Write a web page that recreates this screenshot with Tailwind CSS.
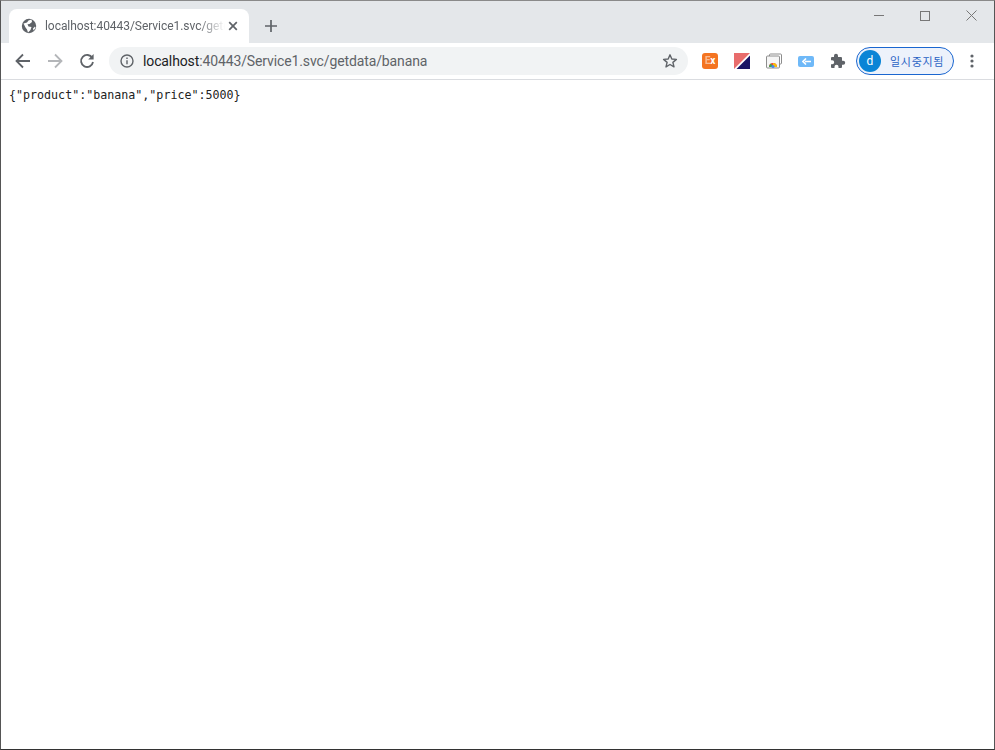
<!DOCTYPE html>
<html lang="ko">
<head>
  <meta charset="UTF-8">
  <title>localhost:40443/Service1.svc/getdata/banana</title>
  <script src="https://cdn.jsdelivr.net/npm/@tailwindcss/browser@4"></script>
</head>
<body class="bg-white">
  <div class="w-[995px] h-[750px] flex flex-col overflow-hidden border border-[#555] border-b-[#333] border-t-[#8a8a8a] font-['Roboto','Liberation_Sans',sans-serif]">

    <!-- Tab strip -->
    <div class="h-[42px] shrink-0 bg-[#e4e7ea] flex items-end pl-2 relative">
      <div class="relative w-[240px] h-[34px] bg-white rounded-t-lg flex items-center pl-[12px] pr-[11px]">
        <svg class="w-4 h-4 shrink-0 mr-[8px]" viewBox="0 0 16 16"><circle cx="8" cy="8" r="7.2" fill="#5f6368"/><path d="M2.5 5.5 6 4.5 7.5 2.5 10.500 1.500 11 4 8.500 6 6.500 6.200 7.500 8.500 10.500 9 9.500 12 7 14.500 6 11.500 4.500 9.500z" fill="#fff"/><path d="M12 10.500 14 8.500 14.500 10 12.500 12.500z" fill="#fff"/></svg>
        <div class="w-[180px] whitespace-nowrap overflow-hidden text-[12px] tracking-[-0.05px] text-[#5f6368] [mask-image:linear-gradient(to_right,black_85%,transparent)]">localhost:40443/Service1.svc/getdata/banana</div>
        <svg class="w-[10px] h-[10px] ml-auto shrink-0" viewBox="0 0 10 10"><path d="M1.200 1.200 8.800 8.800M8.800 1.200 1.200 8.800" stroke="#5f6368" stroke-width="1.700" fill="none"/></svg>
      </div>
      <svg class="w-3 h-3 ml-[16px] mb-[11px]" viewBox="0 0 12 12"><path d="M6 0v12M0 6h12" stroke="#5f6368" stroke-width="1.700" fill="none"/></svg>
      <!-- Window controls -->
      <div class="absolute right-0 top-0 flex items-center gap-[36px] pr-[17px] pt-[9px]">
        <div class="w-[10px] h-[10px] flex items-center"><div class="w-[10px] h-px bg-[#777]"></div></div>
        <div class="w-[10px] h-[10px] border border-[#777]"></div>
        <svg class="w-[11px] h-[11px]" viewBox="0 0 11 11"><path d="M.5.5l10 10M10.500.5l-10 10" stroke="#777" fill="none"/></svg>
      </div>
    </div>

    <!-- Toolbar -->
    <div class="h-[37px] shrink-0 bg-white border-b border-[#dadce0] flex items-center relative">
      <svg class="w-4 h-4 ml-[14px] shrink-0" viewBox="0 0 16 16"><path d="M15 8H2M8 1.500 1.500 8 8 14.500" stroke="#5f6368" stroke-width="1.800" fill="none"/></svg>
      <svg class="w-4 h-4 ml-[16px] shrink-0" viewBox="0 0 16 16"><path d="M1 8h13M8 1.500 14.500 8 8 14.500" stroke="#b4b6b9" stroke-width="1.800" fill="none"/></svg>
      <svg class="w-4 h-4 ml-[16px] shrink-0" viewBox="0 0 16 16"><path d="M13.300 5A6 6 0 1 0 14 9" stroke="#5f6368" stroke-width="1.800" fill="none"/><path d="M14.600 1v5.400H9.200z" fill="#5f6368"/></svg>
      <!-- Address bar -->
      <div class="ml-[14px] w-[579px] h-[28px] shrink-0 rounded-full bg-[#f1f3f4] flex items-center pl-[11px] pr-[10px]">
        <svg class="w-[14px] h-[14px] shrink-0" viewBox="0 0 14 14"><circle cx="7" cy="7" r="6" stroke="#5f6368" stroke-width="1.400" fill="none"/><path d="M7 6.200v4M7 3.600v1.500" stroke="#5f6368" stroke-width="1.400"/></svg>
        <div class="ml-[9px] text-[14px] tracking-[-0.12px] whitespace-nowrap text-[#5f6368]"><span class="text-[#202124]">localhost</span>:40443/Service1.svc/getdata/banana</div>
        <svg class="w-4 h-4 ml-auto shrink-0" viewBox="0 0 16 16"><path d="M8 1.800 9.800 6l4.600.4-3.500 3 1.100 4.500L8 11.500l-4 2.400 1.100-4.500-3.500-3L6.200 6z" stroke="#5f6368" stroke-width="1.400" fill="none" stroke-linejoin="round"/></svg>
      </div>
      <!-- Extensions -->
      <div class="ml-[14px] w-4 h-4 shrink-0 rounded-[3px] bg-[#f47421] flex items-center justify-center text-white text-[10px] font-bold leading-none"><span class="opacity-50">E</span>x</div>
      <svg class="w-4 h-4 ml-[16px] shrink-0" viewBox="0 0 16 16"><path d="M0 0h16L0 16z" fill="#e86c6c"/><path d="M16 2.500V16H2.500z" fill="#1a1464"/></svg>
      <svg class="w-4 h-4 ml-[16px] shrink-0" viewBox="0 0 16 16"><rect x="3.500" y="1" width="12" height="10" rx="1" fill="#fff" stroke="#8d8d8d"/><rect x=".5" y="3" width="13" height="12" rx="1" fill="#f6f6f6" stroke="#8d8d8d"/><path d="M3 14a4 4 0 0 1 8 0z" fill="#ea4335"/><path d="M7 14V10a4 4 0 0 1 4 4z" fill="#fbbc05"/><path d="M3 14a4 4 0 0 1 2-3.400L7 14z" fill="#34a853"/><circle cx="7" cy="13.500" r="1.500" fill="#4285f4"/></svg>
      <div class="ml-[16px] w-4 h-[11px] shrink-0 rounded-[2px] bg-[#6fb9f8] flex items-center justify-center">
        <svg class="w-[9px] h-[7px]" viewBox="0 0 9 7"><path d="M9 3.500H3M4 .5 1 3.500 4 6.500" stroke="#fff" stroke-width="1.600" fill="none"/></svg>
      </div>
      <svg class="w-4 h-4 ml-[16px] shrink-0" viewBox="0 0 16 16"><path d="M6 .8a2 2 0 0 1 2 2V4h3a1 1 0 0 1 1 1v2.700h1.200a2 2 0 0 1 0 4H12V14a1 1 0 0 1-1 1H8.500v-1.200a2 2 0 0 0-4 0V15H2a1 1 0 0 1-1-1v-2.800h1.200a2 2 0 0 0 0-4H1V5a1 1 0 0 1 1-1h2V2.800a2 2 0 0 1 2-2z" fill="#5f6368"/></svg>
      <!-- Profile chip -->
      <div class="ml-[10px] w-[98px] h-[28px] shrink-0 rounded-full border border-[#1a66d0] bg-[#edf2fb] flex items-center pl-[2px]">
        <div class="w-[22px] h-[22px] rounded-full bg-[#0a84d6] text-white text-[12px] flex items-center justify-center">d</div>
        <div class="ml-[9px] text-[11px] tracking-[0.7px] text-[#2a62c4] whitespace-nowrap font-['Noto_Sans_CJK_KR',sans-serif]">일시중지됨</div>
      </div>
      <svg class="w-1 h-[14px] ml-[16px] shrink-0" viewBox="0 0 4 14"><circle cx="2" cy="2" r="1.600" fill="#5f6368"/><circle cx="2" cy="7" r="1.600" fill="#5f6368"/><circle cx="2" cy="12" r="1.600" fill="#5f6368"/></svg>
    </div>

    <!-- Page -->
    <div class="flex-1 bg-white pt-[8px] pl-2">
      <pre class="font-['DejaVu_Sans_Mono',monospace] text-[11.67px] leading-[14px] text-[#222]">{"product":"banana","price":5000}</pre>
    </div>
  </div>
</body>
</html>
